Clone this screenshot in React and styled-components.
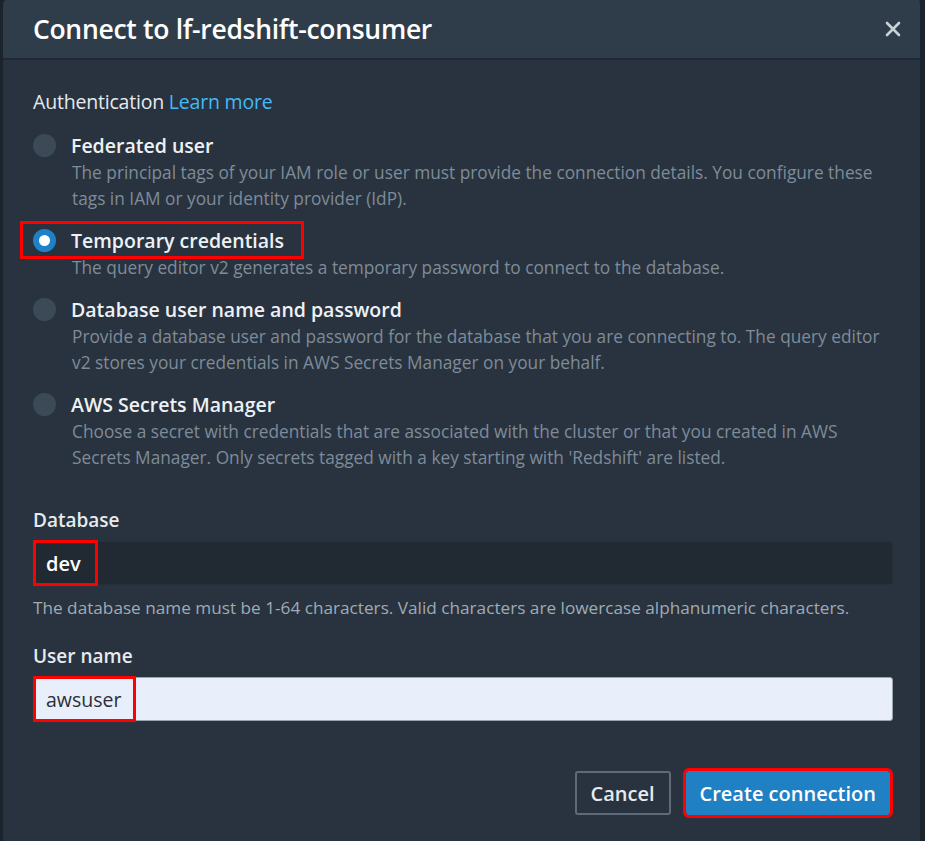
import styled, { createGlobalStyle } from 'styled-components';

const GlobalStyle = createGlobalStyle`
  html, body { margin: 0; padding: 0; background: #1b232c; }
  body { font-family: "Open Sans", "Noto Sans", sans-serif; }
  * { box-sizing: border-box; }
`;

const options = [
  {
    id: 'federated',
    label: 'Federated user',
    desc: 'The principal tags of your IAM role or user must provide the connection details. You configure these tags in IAM or your identity provider (IdP).',
  },
  {
    id: 'temporary',
    label: 'Temporary credentials',
    desc: 'The query editor v2 generates a temporary password to connect to the database.',
    checked: true,
    marked: true,
  },
  {
    id: 'password',
    label: 'Database user name and password',
    desc: 'Provide a database user and password for the database that you are connecting to. The query editor v2 stores your credentials in AWS Secrets Manager on your behalf.',
  },
  {
    id: 'secrets',
    label: 'AWS Secrets Manager',
    desc: "Choose a secret with credentials that are associated with the cluster or that you created in AWS Secrets Manager. Only secrets tagged with a key starting with 'Redshift' are listed.",
  },
];

const App = () => {
  return (
    <>
      <GlobalStyle />
      <Modal>
        <Header>
          <Title>Connect to lf-redshift-consumer</Title>
          <CloseButton aria-label="Close">
            <svg width="18" height="18" viewBox="0 0 18 18">
              <path d="M3 3 L15 15 M15 3 L3 15" stroke="#c9d1d9" strokeWidth="2.6" strokeLinecap="round" />
            </svg>
          </CloseButton>
        </Header>

        <Body>
          <SectionLabel>
            Authentication <Link>Learn more</Link>
          </SectionLabel>

          <RadioList>
            {options.map((opt) => (
              <RadioItem key={opt.id}>
                <RadioHead $marked={opt.marked}>
                  <Radio $checked={opt.checked} />
                  <RadioLabel>{opt.label}</RadioLabel>
                </RadioHead>
                <RadioDesc>{opt.desc}</RadioDesc>
              </RadioItem>
            ))}
          </RadioList>

          <Field $first>
            <FieldLabel>Database</FieldLabel>
            <Input $variant="dark">
              <Marked $pad="0 17px 0 13px" $weight={600}>dev</Marked>
            </Input>
            <Hint>The database name must be 1-64 characters. Valid characters are lowercase alphanumeric characters.</Hint>
          </Field>

          <Field>
            <FieldLabel>User name</FieldLabel>
            <Input $variant="light">
              <Marked $pad="0 15px 0 13px" $weight={400}>awsuser</Marked>
            </Input>
          </Field>

          <Footer>
            <Button>Cancel</Button>
            <Button $primary>Create connection</Button>
          </Footer>
        </Body>
      </Modal>
    </>
  );
};

const Modal = styled.div`
  width: 925px;
  height: 841px;
  background: #28333f;
  border-left: 3px solid #1b232c;
  border-right: 5px solid #1b232c;
  border-radius: 6px 6px 0 0;
  overflow: hidden;
  display: flex;
  flex-direction: column;
`;

const Header = styled.div`
  height: 60px;
  background: #2f3d4b;
  border-bottom: 2px solid #1f2933;
  display: flex;
  align-items: center;
  justify-content: space-between;
  padding: 0 14px 0 30px;
`;

const Title = styled.h1`
  margin: 0;
  font-size: 26.5px;
  font-weight: 600;
  color: #ffffff;
  letter-spacing: -0.3px;
`;

const CloseButton = styled.button`
  background: none;
  border: none;
  padding: 4px;
  display: flex;
  cursor: pointer;
`;

const Body = styled.div`
  padding: 28px 24px 0 30px;
  display: flex;
  flex-direction: column;
`;

const SectionLabel = styled.div`
  font-size: 19.5px;
  line-height: 27px;
  color: #e6eaee;
  margin-bottom: 13px;
  letter-spacing: -0.2px;
`;

const Link = styled.a`
  color: #44b9f4;
  cursor: pointer;
`;

const RadioList = styled.div`
  display: flex;
  flex-direction: column;
  gap: 11px;
`;

const RadioItem = styled.div`
  display: flex;
  flex-direction: column;
`;

const RadioHead = styled.div`
  display: flex;
  align-items: center;
  gap: 15px;
  height: 38px;
  align-self: flex-start;
  margin: -2px 0 -2px -13px;
  padding: 0 20px 0 13px;
  outline: ${(p) => (p.$marked ? '3px solid #ff0000' : 'none')};
  outline-offset: -3px;
`;

const Radio = styled.span`
  width: 23px;
  height: 23px;
  border-radius: 50%;
  flex-shrink: 0;
  background: ${(p) => (p.$checked ? '#ffffff' : '#3c4a58')};
  border: ${(p) => (p.$checked ? '6px solid #1f82c9' : 'none')};
`;

const RadioLabel = styled.span`
  font-size: 19.5px;
  font-weight: 600;
  color: #eef1f4;
`;

const RadioDesc = styled.div`
  padding-left: 39px;
  font-size: 17.3px;
  line-height: 26px;
  color: #7f8b98;
  margin-top: -2px;
`;

const Field = styled.div`
  display: flex;
  flex-direction: column;
  margin-top: ${(p) => (p.$first ? '36px' : '23px')};
`;

const FieldLabel = styled.div`
  font-size: 19px;
  line-height: 26px;
  font-weight: 600;
  color: #e6eaee;
  margin-bottom: 8px;
`;

const Input = styled.div`
  height: 44px;
  width: 860px;
  display: flex;
  align-items: center;
  border-radius: 3px;
  font-size: 20px;
  ${(p) =>
    p.$variant === 'dark'
      ? 'background: #212a33; color: #ffffff; border: 1px solid #26303b;'
      : 'background: #e8eefa; color: #2a2f36; border: 1px solid #9aa4ae; font-size: 19.5px;'}
`;

const Marked = styled.span`
  height: 46px;
  margin: -1px 0 -1px -1px;
  display: flex;
  align-items: center;
  font-weight: ${(p) => p.$weight};
  padding: ${(p) => p.$pad};
  outline: 3px solid #ff0000;
  outline-offset: -3px;
`;

const Hint = styled.div`
  font-size: 17.2px;
  line-height: 24px;
  color: #a0aab5;
  margin-top: 11px;
`;

const Footer = styled.div`
  display: flex;
  justify-content: flex-end;
  gap: 15px;
  margin-top: 50px;
  padding-right: 6px;
`;

const Button = styled.button`
  height: 44px;
  padding: 0 14px;
  font-family: inherit;
  font-size: 20px;
  font-weight: 600;
  border-radius: 3px;
  cursor: pointer;
  color: ${(p) => (p.$primary ? '#ffffff' : '#e6eaee')};
  background: ${(p) => (p.$primary ? '#1f80c4' : 'transparent')};
  border: ${(p) => (p.$primary ? 'none' : '2px solid #5d6a77')};
  outline: ${(p) => (p.$primary ? '3px solid #ff0000' : 'none')};
  outline-offset: 0;
`;

export default App;
